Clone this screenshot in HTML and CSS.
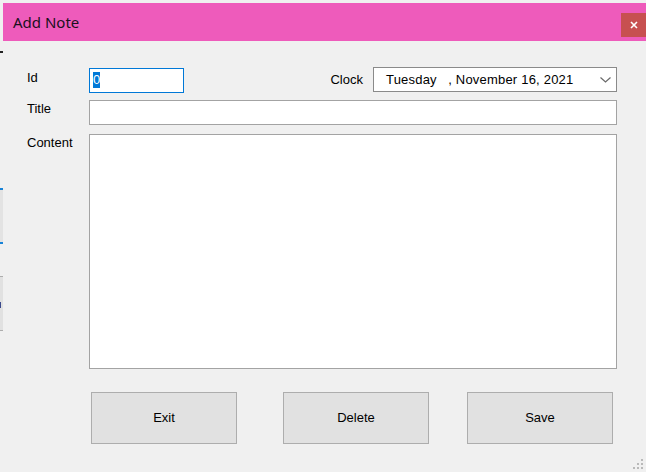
FILE: index.html
```html
<!DOCTYPE html>
<html lang="en">
<head>
<meta charset="utf-8">
<title>Add Note</title>
<link rel="stylesheet" href="styles.css">
</head>
<body>
<div class="screen">
  <div class="behind">
    <div class="b-gap1"></div>
    <div class="b-dash"></div>
    <div class="b-gap2"></div>
    <div class="b-tab"></div>
    <div class="b-gap3"></div>
    <div class="b-btn"><span class="b-mark"></span></div>
  </div>
  <div class="window">
    <div class="titlebar">
      <span class="title">Add Note</span>
      <div class="close">
        <svg width="8" height="8" viewBox="0 0 8 8"><path d="M1 1 L7 7 M7 1 L1 7" stroke="#fff" stroke-width="1.6" fill="none"/></svg>
      </div>
    </div>
    <div class="form">
      <div class="row row1">
        <span class="lbl lbl-id">Id</span>
        <div class="box idbox"><span class="sel">0</span></div>
        <div class="spacer"></div>
        <span class="lbl lbl-clock">Clock</span>
        <div class="picker">
          <span class="date">Tuesday   , November 16, 2021</span>
          <svg class="chev" width="11" height="6" viewBox="0 0 11 6"><path d="M0.5 0.5 L5.5 5 L10.5 0.5" stroke="#6a6a6a" stroke-width="1.2" fill="none"/></svg>
        </div>
      </div>
      <div class="row row2">
        <span class="lbl lbl-down">Title</span>
        <div class="box titlebox"></div>
      </div>
      <div class="row row3">
        <span class="lbl lbl-down">Content</span>
        <div class="box contentbox"></div>
      </div>
      <div class="buttons">
        <div class="btn btn-exit">Exit</div>
        <div class="btn btn-delete">Delete</div>
        <div class="btn btn-save">Save</div>
      </div>
    </div>
    <svg class="grip" width="11" height="11" viewBox="0 0 11 11">
      <rect x="8" y="0" width="2" height="2" fill="#b9b9b9"/>
      <rect x="4" y="4" width="2" height="2" fill="#b9b9b9"/>
      <rect x="8" y="4" width="2" height="2" fill="#b9b9b9"/>
      <rect x="0" y="8" width="2" height="2" fill="#b9b9b9"/>
      <rect x="4" y="8" width="2" height="2" fill="#b9b9b9"/>
      <rect x="8" y="8" width="2" height="2" fill="#b9b9b9"/>
    </svg>
  </div>
</div>
</body>
</html>
```
FILE: styles.css
```css
html, body {
  margin: 0;
  padding: 0;
  background: #f0f0f0;
}
body {
  font-family: "Liberation Sans", Arial, sans-serif;
  font-size: 13px;
  color: #000;
}
.screen {
  display: flex;
  width: 646px;
  height: 472px;
  overflow: hidden;
}
.behind {
  width: 3px;
  flex: none;
  display: flex;
  flex-direction: column;
  background: #f0f0f0;
}
.b-gap1 { height: 51px; }
.b-dash { height: 2px; background: #222; }
.b-gap2 { height: 135px; }
.b-tab {
  height: 52px;
  background: #e3e3e3;
  border-top: 2px solid #1883d7;
  border-bottom: 2px solid #1883d7;
}
.b-gap3 { height: 32px; }
.b-btn {
  height: 53px;
  background: #e1e1e1;
  border-top: 1px solid #adadad;
  border-bottom: 1px solid #adadad;
  display: flex;
  flex-direction: column;
}
.b-mark {
  display: block;
  width: 1px;
  height: 6px;
  margin-top: 25px;
  background: #3b4a8c;
}
.window {
  position: relative;
  flex: 1;
  margin-top: 3px;
  height: 469px;
  background: #f0f0f0;
  display: flex;
  flex-direction: column;
}
.titlebar {
  height: 38px;
  flex: none;
  background: #ee5bbb;
  display: flex;
  align-items: flex-start;
}
.title {
  font-family: "Noto Sans", "Open Sans", sans-serif;
  font-size: 15px;
  line-height: 20px;
  margin: 9px 0 0 10px;
  color: #1a1020;
}
.close {
  margin-left: auto;
  margin-top: 10px;
  width: 25px;
  height: 24px;
  background: #c75050;
  display: flex;
  align-items: center;
  justify-content: center;
}
.form {
  padding: 26px 29px 0 24px;
  display: flex;
  flex-direction: column;
}
.row {
  display: flex;
  align-items: flex-start;
}
.lbl {
  width: 62px;
  flex: none;
  line-height: 15px;
}
.lbl-id { margin-top: 3px; }
.lbl-down { margin-top: 1px; }
.box {
  box-sizing: border-box;
  background: #fff;
  border: 1px solid #a3a3a3;
}
.idbox {
  width: 95px;
  height: 25px;
  margin-top: 1px;
  border-color: #0078d7;
  padding: 3px 0 0 3px;
}
.sel {
  display: inline-block;
  background: #0078d7;
  color: #fff;
  line-height: 16px;
  height: 16px;
  vertical-align: top;
}
.spacer { flex: 1; }
.lbl-clock {
  width: auto;
  margin-top: 5px;
  margin-right: 10px;
}
.picker {
  box-sizing: border-box;
  width: 244px;
  height: 25px;
  border: 1px solid #8a8a8a;
  background: #fff;
  display: flex;
  align-items: center;
  padding-left: 12px;
  padding-right: 5px;
}
.date {
  white-space: pre;
  line-height: 15px;
  letter-spacing: 0.2px;
}
.chev {
  margin-left: auto;
  margin-top: 1px;
}
.row2 { margin-top: 7px; }
.titlebox {
  flex: 1;
  height: 25px;
}
.row3 { margin-top: 9px; }
.contentbox {
  flex: 1;
  height: 235px;
}
.buttons {
  display: flex;
  margin-top: 23px;
  margin-left: 64px;
}
.btn {
  box-sizing: border-box;
  width: 146px;
  height: 52px;
  background: #e1e1e1;
  border: 1px solid #adadad;
  display: flex;
  align-items: center;
  justify-content: center;
  line-height: 15px;
  padding-bottom: 1px;
}
.btn-delete { margin-left: 46px; }
.btn-save { margin-left: 38px; }
.grip {
  position: absolute;
  right: 2px;
  bottom: 2px;
}
```
